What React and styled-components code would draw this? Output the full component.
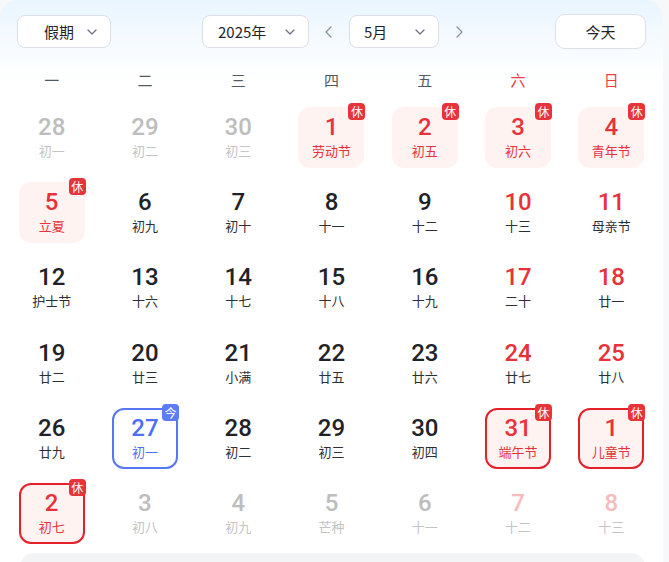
import React from 'react';
import styled, { createGlobalStyle } from 'styled-components';

const GlobalStyle = createGlobalStyle`
  html, body {
    margin: 0;
    padding: 0;
    background: #f7f8fa;
    font-family: Roboto, "Noto Sans CJK SC", sans-serif;
  }
`;

const weekdays = ['一', '二', '三', '四', '五', '六', '日'];

// kind: other = other month, rest = 休 holiday, out = outlined holiday, today
const weeks = [
  [
    { d: 28, l: '初一', kind: 'other' },
    { d: 29, l: '初二', kind: 'other' },
    { d: 30, l: '初三', kind: 'other' },
    { d: 1, l: '劳动节', kind: 'rest' },
    { d: 2, l: '初五', kind: 'rest' },
    { d: 3, l: '初六', kind: 'rest' },
    { d: 4, l: '青年节', kind: 'rest' },
  ],
  [
    { d: 5, l: '立夏', kind: 'rest' },
    { d: 6, l: '初九' },
    { d: 7, l: '初十' },
    { d: 8, l: '十一' },
    { d: 9, l: '十二' },
    { d: 10, l: '十三' },
    { d: 11, l: '母亲节' },
  ],
  [
    { d: 12, l: '护士节' },
    { d: 13, l: '十六' },
    { d: 14, l: '十七' },
    { d: 15, l: '十八' },
    { d: 16, l: '十九' },
    { d: 17, l: '二十' },
    { d: 18, l: '廿一' },
  ],
  [
    { d: 19, l: '廿二' },
    { d: 20, l: '廿三' },
    { d: 21, l: '小满' },
    { d: 22, l: '廿五' },
    { d: 23, l: '廿六' },
    { d: 24, l: '廿七' },
    { d: 25, l: '廿八' },
  ],
  [
    { d: 26, l: '廿九' },
    { d: 27, l: '初一', kind: 'today' },
    { d: 28, l: '初二' },
    { d: 29, l: '初三' },
    { d: 30, l: '初四' },
    { d: 31, l: '端午节', kind: 'out' },
    { d: 1, l: '儿童节', kind: 'out' },
  ],
  [
    { d: 2, l: '初七', kind: 'out' },
    { d: 3, l: '初八', kind: 'other' },
    { d: 4, l: '初九', kind: 'other' },
    { d: 5, l: '芒种', kind: 'other' },
    { d: 6, l: '十一', kind: 'other' },
    { d: 7, l: '十二', kind: 'other' },
    { d: 8, l: '十三', kind: 'other' },
  ],
];

const Chevron = ({ dir = 'down', size = 16, color = '#6b7280' }) => {
  const paths = {
    down: 'M4 6l4 4 4-4',
    left: 'M10 3L5 8l5 5',
    right: 'M6 3l5 5-5 5',
  };
  return (
    <svg width={size} height={size} viewBox="0 0 16 16" fill="none">
      <path d={paths[dir]} stroke={color} strokeWidth="1.3" strokeLinecap="round" strokeLinejoin="round" />
    </svg>
  );
};

const numColor = (kind, weekend) => {
  if (kind === 'today') return '#4f6ef7';
  if (kind === 'other') return weekend ? '#f8babd' : '#bdbdbd';
  if (kind === 'rest' || kind === 'out' || weekend) return '#e8323a';
  return '#1f2329';
};

const lunarColor = (kind) => {
  if (kind === 'today') return '#4f6ef7';
  if (kind === 'other') return '#c4c4c4';
  if (kind === 'rest' || kind === 'out') return '#e8323a';
  return '#2b2f36';
};

const App = () => {
  return (
    <>
      <GlobalStyle />
      <Card>
        <Header>
          <Select $w={94} $pl={26}>
            <span>假期</span>
            <Chevron />
          </Select>
          <Center>
            <Select $w={107} $pl={15}>
              <span>2025年</span>
              <Chevron />
            </Select>
            <Arrow><Chevron dir="left" color="#8a9099" /></Arrow>
            <Select $w={90} $pl={14}>
              <span>5月</span>
              <Chevron />
            </Select>
            <Arrow><Chevron dir="right" color="#8a9099" /></Arrow>
          </Center>
          <TodayButton>今天</TodayButton>
        </Header>

        <WeekRow>
          {weekdays.map((w, i) => (
            <WeekLabel key={w} $red={i > 4}>{w}</WeekLabel>
          ))}
        </WeekRow>

        <Grid>
          {weeks.map((week, r) =>
            week.map((c, i) => {
              const weekend = i > 4;
              return (
                <Cell key={`${r}-${i}`}>
                  <DayBox $kind={c.kind}>
                    <Num style={{ color: numColor(c.kind, weekend) }}>{c.d}</Num>
                    <Lunar style={{ color: lunarColor(c.kind) }}>{c.l}</Lunar>
                    {(c.kind === 'rest' || c.kind === 'out') && <Badge>休</Badge>}
                    {c.kind === 'today' && <Badge $blue>今</Badge>}
                  </DayBox>
                </Cell>
              );
            })
          )}
        </Grid>
        <Footer />
      </Card>
    </>
  );
};

const Card = styled.div`
  width: 663px;
  height: 562px;
  overflow: hidden;
  background: linear-gradient(180deg, #e9f5ff 0px, #f6fbff 45px, #ffffff 80px);
  border-radius: 18px 18px 0 0;
  box-sizing: border-box;
`;

const Header = styled.div`
  display: flex;
  align-items: center;
  justify-content: space-between;
  padding: 14px 17px 0 17px;
  height: 35px;
`;

const Center = styled.div`
  display: flex;
  align-items: center;
  margin-left: 91px;
  margin-right: auto;
`;

const Select = styled.div`
  width: ${(p) => p.$w}px;
  height: 33px;
  box-sizing: border-box;
  display: flex;
  align-items: center;
  justify-content: space-between;
  padding: 0 10px 0 ${(p) => p.$pl}px;
  background: #ffffff;
  border: 1px solid #dcdfe6;
  border-radius: 8px;
  font-size: 15px;
  color: #1f2329;
  font-family: "Noto Sans CJK SC", sans-serif;
`;

const Arrow = styled.div`
  width: 40px;
  display: flex;
  align-items: center;
  justify-content: center;
`;

const TodayButton = styled.div`
  width: 91px;
  height: 35px;
  box-sizing: border-box;
  display: flex;
  align-items: center;
  justify-content: center;
  background: #ffffff;
  border: 1px solid #dcdfe6;
  border-radius: 10px;
  font-size: 15px;
  color: #1f2329;
  font-family: "Noto Sans CJK SC", sans-serif;
`;

const WeekRow = styled.div`
  display: grid;
  grid-template-columns: repeat(7, 1fr);
  padding: 0 5px;
  margin-top: 15px;
  height: 30px;
  align-items: center;
`;

const WeekLabel = styled.div`
  text-align: center;
  font-size: 15px;
  color: ${(p) => (p.$red ? '#ee3b43' : '#555a62')};
  font-family: "Noto Sans CJK SC", sans-serif;
`;

const Grid = styled.div`
  display: grid;
  grid-template-columns: repeat(7, 1fr);
  grid-auto-rows: 75.2px;
  padding: 13px 5px 0 5px;
`;

const Cell = styled.div`
  display: flex;
  justify-content: center;
  align-items: flex-start;
`;

const DayBox = styled.div`
  position: relative;
  width: 66px;
  height: 61px;
  box-sizing: border-box;
  border-radius: 12px;
  display: flex;
  flex-direction: column;
  align-items: center;
  padding-top: 6px;
  background: ${(p) =>
    p.$kind === 'rest' || p.$kind === 'out' ? '#fff3f2' : 'transparent'};
  border: 2px solid
    ${(p) =>
      p.$kind === 'out' ? '#e5202a' : p.$kind === 'today' ? '#5676f5' : 'transparent'};
`;

const Num = styled.div`
  font-family: Roboto, sans-serif;
  font-weight: 500;
  font-size: 24px;
  line-height: 24px;
`;

const Lunar = styled.div`
  margin-top: 4px;
  font-family: "Noto Sans CJK SC", sans-serif;
  font-size: 13px;
  line-height: 16px;
`;

const Badge = styled.div`
  position: absolute;
  top: -6px;
  right: -3px;
  width: 17px;
  height: 17px;
  border-radius: 4px;
  background: ${(p) => (p.$blue ? '#5b7cf8' : '#e8333b')};
  color: #ffffff;
  font-size: 12px;
  line-height: 17px;
  text-align: center;
  font-family: "Noto Sans CJK SC", sans-serif;
`;

const Footer = styled.div`
  margin: -5px 18px 0 20px;
  height: 40px;
  background: #f3f4f6;
  border-radius: 14px 14px 0 0;
`;

export default App;
